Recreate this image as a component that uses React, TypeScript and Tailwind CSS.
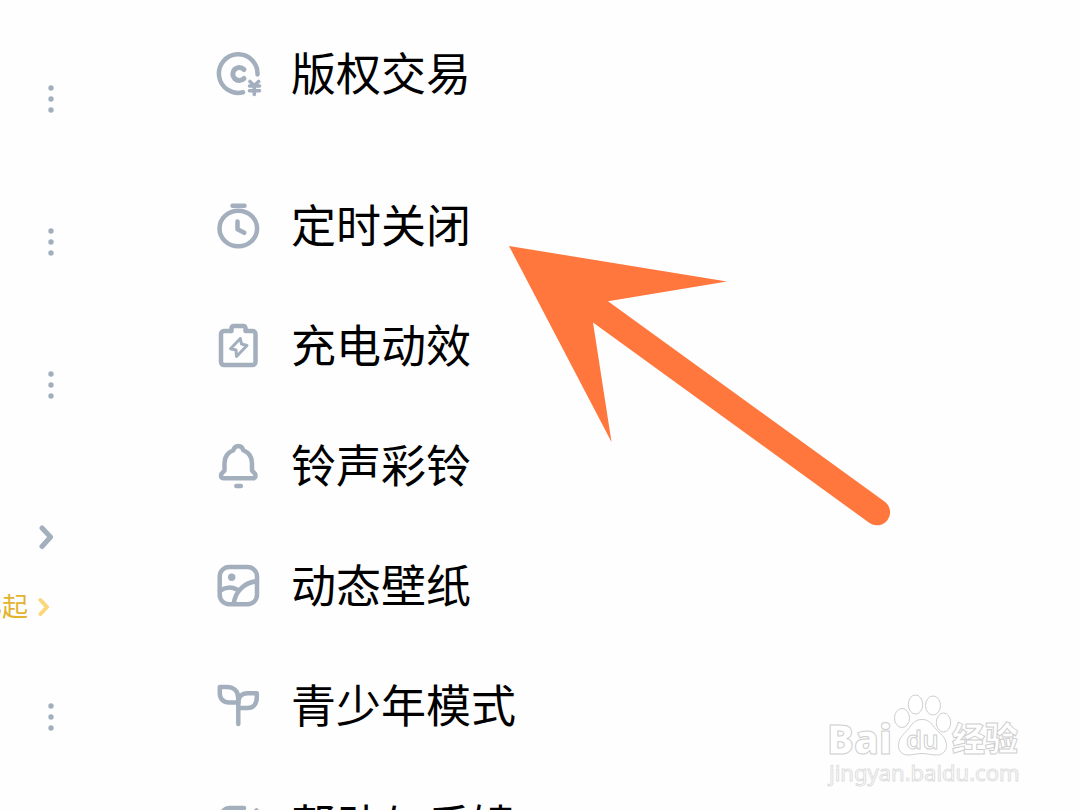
import type { ReactNode } from 'react'

const MENU: { label: string; icon: ReactNode }[][] = [
  [
    {
      label: '版权交易',
      icon: (
        <>
          <path d="M43.500 23.500A19.300 19.300 0 1 0 29 41.300" />
          <path d="M30 18.500a6.500 6.500 0 1 0 0 9" strokeWidth="5" />
          <path d="M36 30.500l4.300 4.200 4.300-4.200M35.500 35h10M35.500 39.700h10M40.300 35v8.500" strokeWidth="3.600" />
        </>
      ),
    },
  ],
  [
    {
      label: '定时关闭',
      icon: (
        <>
          <path d="M18.500 2.700h12" />
          <ellipse cx="24.300" cy="25.500" rx="18.800" ry="17.800" />
          <path d="M23.500 18.500v7.700l6.800 3.600" />
        </>
      ),
    },
    {
      label: '充电动效',
      icon: (
        <>
          <path d="M17.500 8H10a3 3 0 0 0-3 3v28a3 3 0 0 0 3 3h28.500a3 3 0 0 0 3-3V11a3 3 0 0 0-3-3H31.500V5a2 2 0 0 0-2-2h-10a2 2 0 0 0-2 2v3" />
          <path d="M26.300 15.500L16.500 25.700l5.500 1.300.5 6.500 10.500-11-5.500-1.500z" strokeWidth="3" />
        </>
      ),
    },
    {
      label: '铃声彩铃',
      icon: (
        <>
          <path d="M19.300 7.300C20 4.500 22 3 24.300 3s4.300 1.500 5 4.300C34.500 9.500 38 14 38 20v7.500c.5 1.500 3.500 2.200 3.500 5 0 1.700-1.200 2.800-3 2.800H10c-1.800 0-3-1.100-3-2.800 0-2.800 3-3.500 3.500-5V20c0-6 3.600-10.500 8.800-12.700z" />
          <path d="M22.300 43h4.500" />
        </>
      ),
    },
    {
      label: '动态壁纸',
      icon: (
        <>
          <rect x="5.700" y="4" width="37.300" height="37.300" rx="9.500" />
          <circle cx="17.700" cy="14.300" r="3.700" fill="currentColor" stroke="none" />
          <path d="M43 18.300C31 19 21 28 19.700 41M6 27.700c5.500-3.800 12-4 17-1.200" />
        </>
      ),
    },
    {
      label: '青少年模式',
      icon: (
        <>
          <path d="M24.300 41V15.500C24.300 8.500 20 4 13 4H5.800v6c0 6 3.700 9.500 9.200 9.500h9.300" />
          <path d="M24.300 20c0-6 3.500-9.700 9.200-9.700h9.300v4c0 6.500-3.300 10.700-9.300 10.700h-9.200" />
        </>
      ),
    },
    {
      label: '帮助与反馈',
      icon: (
        <>
          <path d="M30 5H16A9.500 9.500 0 0 0 6.500 14.500v18A9.500 9.500 0 0 0 16 42h17a9.500 9.500 0 0 0 9.500-9.500V20" />
          <path d="M42.500 7.500L26 24" />
        </>
      ),
    },
  ],
]

function MoreButton() {
  return (
    <button aria-label="更多" className="flex h-[143px] w-full items-center justify-end pr-2">
      <svg width="6" height="28" viewBox="0 0 6 28" fill="currentColor">
        <circle cx="3" cy="3" r="2.700" />
        <circle cx="3" cy="14" r="2.700" />
        <circle cx="3" cy="25" r="2.700" />
      </svg>
    </button>
  )
}

function SongStrip() {
  return (
    <aside className="w-[62px] shrink-0 overflow-hidden pt-[27px] text-[#a3afbd]">
      <MoreButton />
      <MoreButton />
      <MoreButton />
      <button aria-label="展开" className="mt-[61px] flex h-10 w-full items-center justify-end pr-2">
        <svg width="16" height="26" viewBox="0 0 16 26" fill="none" stroke="currentColor" strokeWidth="5" strokeLinecap="round" strokeLinejoin="round">
          <path d="M4 4l8.500 9L4 22.500" />
        </svg>
      </button>
      <a href="#vip" className="mt-[30px] flex h-10 w-full items-center justify-end gap-2.5 pr-3 text-[26px] whitespace-nowrap text-[#e3b32f]">
        <span className="pb-1.5">8起</span>
        <svg className="shrink-0" width="12" height="20" viewBox="0 0 12 20" fill="none" stroke="#fad777" strokeWidth="4" strokeLinecap="round" strokeLinejoin="round">
          <path d="M2.500 3L9 10l-6.500 7" />
        </svg>
      </a>
      <div className="pt-[18px]">
        <MoreButton />
      </div>
    </aside>
  )
}

function Arrow() {
  return (
    <svg className="pointer-events-none absolute top-[244px] left-[508px]" width="384" height="284" viewBox="0 0 384 284" fill="#ff773d">
      <path d="M1 2L219 37.500 100 57.200 376.500 257.500a13 13 0 0 1-15 21.500L85 78.500 103.500 198z" />
    </svg>
  )
}

function Watermark() {
  return (
    <svg className="pointer-events-none absolute right-[50px] bottom-[10px]" width="210" height="110" viewBox="0 0 210 110" fill="#fff" stroke="#cfcfcf" strokeWidth="1">
      <g fontFamily="'Open Sans', 'Noto Sans CJK SC', sans-serif" fontWeight="700">
        <text x="7" y="64" fontSize="40" fontWeight="800">Bai</text>
        <ellipse cx="82" cy="28" rx="7.500" ry="9.500" />
        <ellipse cx="95.500" cy="14.500" rx="7.200" ry="9.500" />
        <ellipse cx="113" cy="15.500" rx="7.500" ry="9.500" />
        <ellipse cx="123.500" cy="32.500" rx="7.200" ry="9.500" />
        <path d="M102 29.500c6 0 9 3 12.500 8 4 5.500 12 9 12 18 0 6-4.500 9.500-10 9.500-5 0-9-1.500-14.500-1.500S93 65 88 65c-6 0-9.500-4-9.500-9.500 0-8.500 6.500-12 11-18 3.500-5 6.500-8 12.500-8z" />
        <text x="86" y="59" fontSize="26" fontWeight="600">du</text>
        <text x="132" y="61" fontSize="33" fontWeight="900">经验</text>
      </g>
      <text x="9" y="91" fontSize="22" fontFamily="'Noto Sans', sans-serif" stroke="#dedede">jingyan.baidu.com</text>
    </svg>
  )
}

export default function App() {
  return (
    <div
      className="relative flex h-screen overflow-hidden bg-[#fefefe] text-black"
      style={{ fontFamily: '"Noto Sans CJK SC", sans-serif' }}
    >
      <SongStrip />
      <nav className="flex flex-1 flex-col gap-8 pt-[15px] pl-[152px]">
        {MENU.map((group, i) => (
          <ul key={i}>
            {group.map(item => (
              <li key={item.label}>
                <a href="#menu" className="flex h-30 items-center gap-[29px] text-[45px] leading-none">
                  <svg
                    className="shrink-0 text-[#a3afbd]"
                    width="48"
                    height="48"
                    viewBox="0 0 48 48"
                    fill="none"
                    stroke="currentColor"
                    strokeWidth="4.500"
                    strokeLinecap="round"
                    strokeLinejoin="round"
                  >
                    {item.icon}
                  </svg>
                  <span className="pb-2">{item.label}</span>
                </a>
              </li>
            ))}
          </ul>
        ))}
      </nav>
      <Arrow />
      <Watermark />
    </div>
  )
}
